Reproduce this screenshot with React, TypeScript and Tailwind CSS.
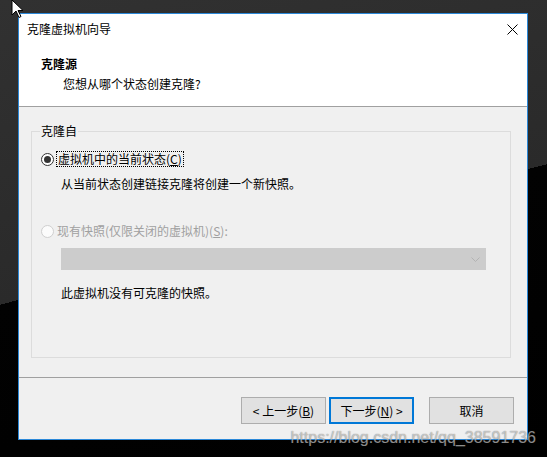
import React from 'react';

const font = { fontFamily: '"Noto Sans CJK SC", "Noto Sans", sans-serif' };

function CloseIcon() {
  return (
    <svg width="11" height="11" viewBox="0 0 11 11" className="block">
      <path d="M0.5 0.5L10.5 10.5M10.5 0.5L0.5 10.5" stroke="#000" strokeWidth="1" />
    </svg>
  );
}

function Cursor() {
  return (
    <svg width="14" height="20" viewBox="0 0 14 20" className="absolute left-[11px] top-[-1px]">
      <path d="M1 1V16L5 12L8 18.5L10 17.5L7 11.5H12Z" fill="#fff" stroke="#000" strokeWidth="1" strokeLinejoin="round" />
    </svg>
  );
}

function Radio({ checked, disabled }: { checked?: boolean; disabled?: boolean }) {
  return (
    <span
      className={`flex h-[13px] w-[13px] shrink-0 items-center justify-center rounded-full border ${
        disabled ? 'border-[#cfcfcf] bg-[#fbfbfb]' : 'border-[#333] bg-white'
      }`}
    >
      {checked && <span className="h-[7px] w-[7px] rounded-full bg-[#333]" />}
    </span>
  );
}

function Button({ children, primary }: { children: React.ReactNode; primary?: boolean }) {
  return (
    <button
      className={`flex h-[27px] w-[85px] items-center justify-center bg-[#e1e1e1] text-[12px] text-black ${
        primary ? 'border-2 border-[#0078d7]' : 'border border-[#adadad]'
      }`}
    >
      {children}
    </button>
  );
}

export default function App() {
  return (
    <div
      className="relative h-[457px] w-[547px] overflow-hidden bg-[linear-gradient(165.6deg,#313131_0%,#2a2a2a_51%,#020202_51%,#000_100%)] pl-[18px] pt-[13px]"
      style={font}
    >
      <div className="flex h-[427px] w-[510px] flex-col border border-[#2b88d8] bg-[#f0f0f0] text-[12px] leading-[16px] text-black">
        {/* header */}
        <div className="h-[93px] border-b border-[#a0a0a0] bg-white">
          <div className="flex h-[30px] items-center justify-between pl-[8px] pr-[9px]">
            <span>克隆虚拟机向导</span>
            <CloseIcon />
          </div>
          <div className="mt-[12px] pl-[22px] font-bold">克隆源</div>
          <div className="mt-[4px] pl-[44px]">您想从哪个状态创建克隆?</div>
        </div>

        {/* body */}
        <div className="flex flex-1 flex-col">
          <div className="relative ml-[12px] mt-[24px] h-[227px] w-[480px] border border-[#dcdcdc] pl-[9px] pt-[19px]">
            <span className="absolute left-[8px] top-[-9px] bg-[#f0f0f0] px-px">克隆自</span>

            <div className="flex h-[16px] items-center">
              <Radio checked />
              <span className="ml-[2px] border border-dotted border-black px-[1px] leading-[14px]">
                虚拟机中的当前状态(<span className="underline">C</span>)
              </span>
            </div>
            <div className="mt-[9px] pl-[20px]">从当前状态创建链接克隆将创建一个新快照。</div>

            <div className="mt-[31px] flex h-[16px] items-center text-[#a0a0a0]">
              <Radio disabled />
              <span className="ml-[3px]">
                现有快照(仅限关闭的虚拟机)(<span className="underline">S</span>):
              </span>
            </div>
            <div className="ml-[20px] mt-[9px] flex h-[22px] w-[425px] items-center justify-end bg-[#cccccc] pr-[6px]">
              <svg width="9" height="5" viewBox="0 0 9 5">
                <path d="M0.5 0.5L4.5 4.5L8.5 0.5" fill="none" stroke="#b3b3b3" strokeWidth="1" />
              </svg>
            </div>
            <div className="mt-[15px] pl-[20px]">此虚拟机没有可克隆的快照。</div>
          </div>

          <div className="mt-[19px] h-px bg-[#a0a0a0]" />

          <div className="flex justify-end pr-[13px] pt-[19px]">
            <Button>
              &lt; 上一步(<span className="underline">B</span>)
            </Button>
            <div className="ml-[3px]">
              <Button primary>
                下一步(<span className="underline">N</span>) &gt;
              </Button>
            </div>
            <div className="ml-[15px]">
              <Button>取消</Button>
            </div>
          </div>
        </div>
      </div>

      <Cursor />

      <span
        className="absolute right-[11px] top-[428px] text-[16px] leading-[20px] text-white/55 [text-shadow:0_0_1px_rgba(0,0,0,0.6)]"
        style={{ fontFamily: '"Liberation Sans", Arial, sans-serif' }}
      >
        https://blog.csdn.net/qq_38591736
      </span>
    </div>
  );
}
